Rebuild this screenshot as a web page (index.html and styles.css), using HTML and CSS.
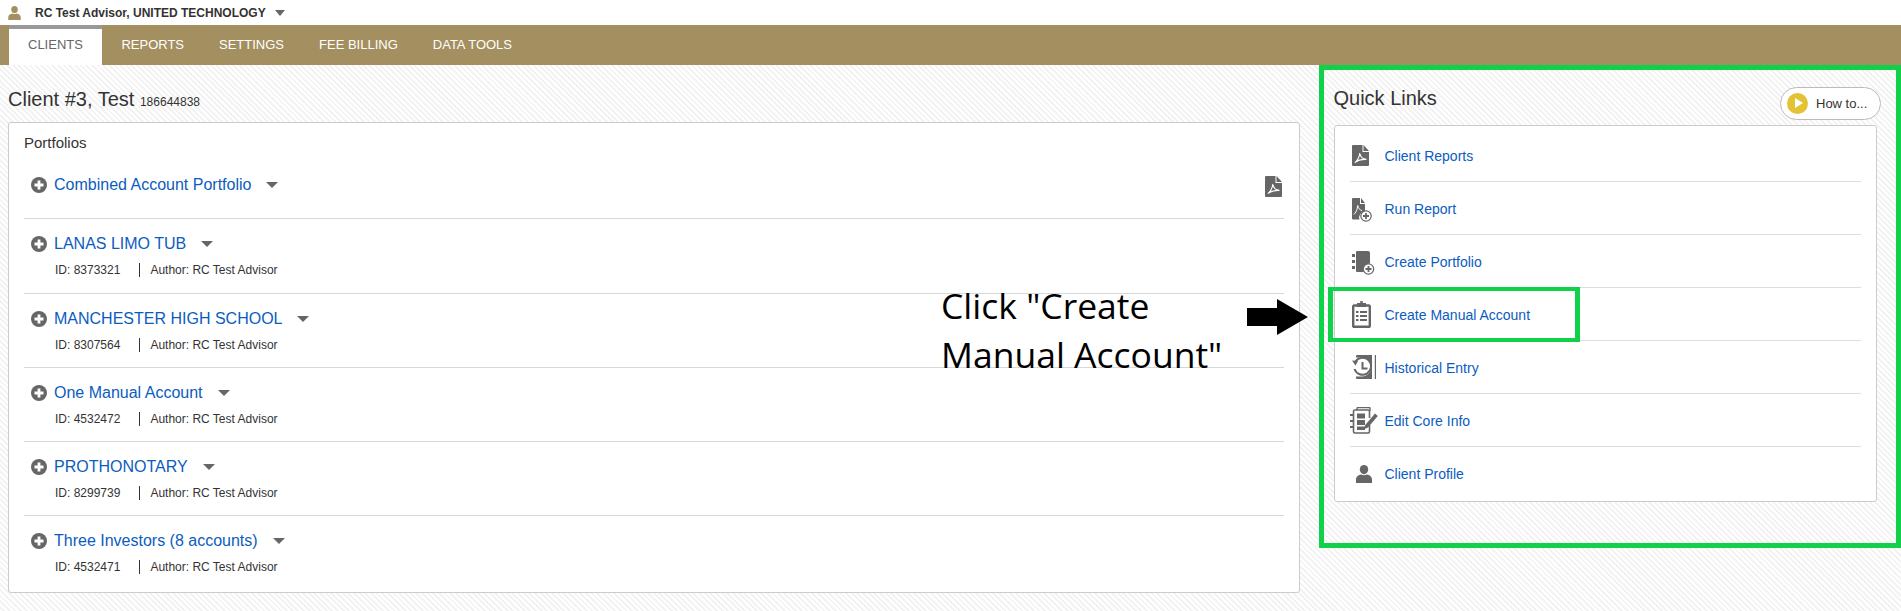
FILE: index.html
```html
<!DOCTYPE html>
<html lang="en">
<head>
    <meta charset="UTF-8">
    <meta name="viewport" content="width=device-width, initial-scale=1.0">
    <title>Client Overview</title>
    <link rel="stylesheet" href="styles.css">
</head>
<body>

<svg class="icon-defs" xmlns="http://www.w3.org/2000/svg">
    <symbol id="icon-person" viewBox="0 0 16 18">
        <ellipse cx="8" cy="4.6" rx="4.2" ry="4.6"/>
        <path d="M0 18v-3.6C0 11.6 2.6 10 5 9.6c1.8 1 4.2 1 6 0 2.4.4 5 2 5 4.8V18z"/>
    </symbol>
    <symbol id="icon-plus" viewBox="0 0 16 16">
        <circle cx="8" cy="8" r="8"/>
        <path d="M6.6 3.5h2.8v3.1h3.1v2.8H9.4v3.1H6.6V9.4H3.5V6.6h3.1z" fill="#fff"/>
    </symbol>
    <symbol id="icon-pdf" viewBox="0 0 17 21">
        <path d="M1 0h9.5v7H17v13a1 1 0 0 1-1 1H1a1 1 0 0 1-1-1V1a1 1 0 0 1 1-1z"/>
        <path d="M11.5 0L17 6h-5.500z"/>
        <path d="M2.800 17.500C5 16.500 7.500 12 7.800 8c.4 3.500 3 6 6.700 6.400-3.700-.2-8.500.8-11.700 3.100z" fill="none" stroke="#fff" stroke-width="1.100"/>
    </symbol>
    <symbol id="icon-run" viewBox="0 0 20 24">
        <path d="M1 0h7v6h5v7.500a6 6 0 0 0-5.500 8H1a1 1 0 0 1-1-1V1a1 1 0 0 1 1-1z"/>
        <path d="M9 0l4 5H9z"/>
        <path d="M1.800 16.500C4 15 5.500 11 5.700 7.500c.4 2.500 2 4.500 4.300 5.100" fill="none" stroke="#fff" stroke-width="1"/>
        <circle cx="14" cy="18" r="5.200" fill="#fff" stroke="#666" stroke-width="1.200"/>
        <path d="M13.100 15h1.800v2.100H17v1.800h-2.100V21h-1.800v-2.100H11v-1.800h2.100z"/>
    </symbol>
    <symbol id="icon-book-add" viewBox="0 0 23 24">
        <path d="M5 0h11a2 2 0 0 1 2 2v10.500a6 6 0 0 0-6 8.500H5a1 1 0 0 1-1-1V1a1 1 0 0 1 1-1z"/>
        <path d="M0 3h3v3H0zM0 9h3v3H0zM0 15h3v3H0z"/>
        <circle cx="16.500" cy="18" r="5.200" fill="#fff" stroke="#666" stroke-width="1.200"/>
        <path d="M15.600 15h1.800v2.100h2.100v1.800h-2.100V21h-1.800v-2.100h-2.100v-1.800h2.100z"/>
    </symbol>
    <symbol id="icon-clipboard" viewBox="0 0 19 27">
        <path d="M2 4.500h15a.8.800 0 0 1 .8.800v19.700a.8.800 0 0 1-.8.800H2a.8.800 0 0 1-.8-.800V5.300a.8.800 0 0 1 .8-.800z" fill="none" stroke="#666" stroke-width="2.400"/>
        <path d="M8.300 0h2.400v2H14v4H5V2h3.300z"/>
        <path d="M4 10h2.500v2H4zM8 10h7v2H8zM4 14h2.500v2H4zM8 14h7v2H8zM4 18h2.500v2H4zM8 18h7v2H8z"/>
    </symbol>
    <symbol id="icon-history" viewBox="0 0 24 24">
        <path d="M5 0h15v24H5a1 1 0 0 1-1-1v-1.500h6a9.500 9.500 0 0 0 0-19H4V1a1 1 0 0 1 1-1z"/>
        <rect x="22.800" y="0" width="1.200" height="24"/>
        <path d="M3.500 6.500A8.500 8.500 0 1 1 2.500 14" fill="none" stroke="#666" stroke-width="2"/>
        <path d="M0 5.500l6 .5-2.500 4.500z"/>
        <path d="M9.500 7h2v5.500h4v2h-6z"/>
    </symbol>
    <symbol id="icon-edit" viewBox="0 0 28 27">
        <path d="M7 3V1.500A1 1 0 0 1 8 .5h11a1 1 0 0 1 1 1V4" fill="none" stroke="#666" stroke-width="1.400"/>
        <path d="M18 26H5a1.500 1.500 0 0 1-1.500-1.500V4.500A1.500 1.500 0 0 1 5 3h13a1.500 1.500 0 0 1 1.500 1.500V11M19.500 18v6.500A1.500 1.500 0 0 1 18 26" fill="none" stroke="#666" stroke-width="1.600"/>
        <path d="M0 7h4v2H0zM0 13h4v2H0zM0 19h4v2H0z"/>
        <path d="M7 6.500h8v5H7zM7 13h8v5H7zM7 19.500h8v3.500H7z"/>
        <path d="M25 6.500l2.800 2.400-9.800 11.600-3.700 1.500.9-3.900z"/>
    </symbol>
</svg>

<div class="user-bar">
    <svg class="user-icon"><use href="#icon-person"/></svg>
    <span class="user-name">RC Test Advisor, UNITED TECHNOLOGY</span>
    <span class="caret user-caret"></span>
</div>

<nav class="main-nav">
    <a href="#" class="nav-tab active">CLIENTS</a>
    <a href="#" class="nav-tab">REPORTS</a>
    <a href="#" class="nav-tab">SETTINGS</a>
    <a href="#" class="nav-tab">FEE BILLING</a>
    <a href="#" class="nav-tab">DATA TOOLS</a>
</nav>

<div class="content">
    <main class="client-col">
        <h1 class="client-title">Client #3, Test <small>186644838</small></h1>

        <section class="card portfolios">
            <h2 class="portfolios-title">Portfolios</h2>

            <div class="portfolio combined">
                <div class="portfolio-head">
                    <svg class="plus-icon"><use href="#icon-plus"/></svg>
                    <a href="#" class="portfolio-link">Combined Account Portfolio</a>
                    <span class="caret"></span>
                </div>
                <svg class="pdf-icon"><use href="#icon-pdf"/></svg>
            </div>

            <div class="portfolio">
                <div class="portfolio-head">
                    <svg class="plus-icon"><use href="#icon-plus"/></svg>
                    <a href="#" class="portfolio-link">LANAS LIMO TUB</a>
                    <span class="caret"></span>
                </div>
                <div class="portfolio-meta"><span class="meta-id">ID: 8373321</span><span>Author: RC Test Advisor</span></div>
            </div>

            <div class="portfolio">
                <div class="portfolio-head">
                    <svg class="plus-icon"><use href="#icon-plus"/></svg>
                    <a href="#" class="portfolio-link">MANCHESTER HIGH SCHOOL</a>
                    <span class="caret"></span>
                </div>
                <div class="portfolio-meta"><span class="meta-id">ID: 8307564</span><span>Author: RC Test Advisor</span></div>
            </div>

            <div class="portfolio">
                <div class="portfolio-head">
                    <svg class="plus-icon"><use href="#icon-plus"/></svg>
                    <a href="#" class="portfolio-link">One Manual Account</a>
                    <span class="caret"></span>
                </div>
                <div class="portfolio-meta"><span class="meta-id">ID: 4532472</span><span>Author: RC Test Advisor</span></div>
            </div>

            <div class="portfolio">
                <div class="portfolio-head">
                    <svg class="plus-icon"><use href="#icon-plus"/></svg>
                    <a href="#" class="portfolio-link">PROTHONOTARY</a>
                    <span class="caret"></span>
                </div>
                <div class="portfolio-meta"><span class="meta-id">ID: 8299739</span><span>Author: RC Test Advisor</span></div>
            </div>

            <div class="portfolio last">
                <div class="portfolio-head">
                    <svg class="plus-icon"><use href="#icon-plus"/></svg>
                    <a href="#" class="portfolio-link">Three Investors (8 accounts)</a>
                    <span class="caret"></span>
                </div>
                <div class="portfolio-meta"><span class="meta-id">ID: 4532471</span><span>Author: RC Test Advisor</span></div>
            </div>
        </section>
    </main>

    <aside class="links-col">
        <div class="links-head">
            <h2 class="links-title">Quick Links</h2>
            <a href="#" class="howto-button"><span class="play-dot"></span>How to...</a>
        </div>

        <ul class="card links-list">
            <li><svg class="link-icon pdf"><use href="#icon-pdf"/></svg><a href="#">Client Reports</a></li>
            <li><svg class="link-icon run"><use href="#icon-run"/></svg><a href="#">Run Report</a></li>
            <li><svg class="link-icon add"><use href="#icon-book-add"/></svg><a href="#">Create Portfolio</a></li>
            <li class="picked"><svg class="link-icon clip"><use href="#icon-clipboard"/></svg><a href="#">Create Manual Account</a></li>
            <li><svg class="link-icon hist"><use href="#icon-history"/></svg><a href="#">Historical Entry</a></li>
            <li><svg class="link-icon edit"><use href="#icon-edit"/></svg><a href="#">Edit Core Info</a></li>
            <li><svg class="link-icon user"><use href="#icon-person"/></svg><a href="#">Client Profile</a></li>
        </ul>
    </aside>
</div>

<!-- Annotation drawn over the page -->
<div class="callout">Click "Create<br>Manual Account"</div>
<svg class="callout-arrow" viewBox="0 0 61 36"><path d="M0 9h30V0l31 18-31 18v-9H0z"/></svg>

</body>
</html>
```

FILE: styles.css
```css
* {
    box-sizing: border-box;
}
body {
    font-family: "Liberation Sans", Arial, sans-serif;
    margin: 0;
    height: 611px;
    overflow: hidden;
    position: relative;
    color: #333;
    background-color: #fff;
    background-image: repeating-linear-gradient(45deg, #fff 0, #fff 2px, #f3f3f3 2px, #f3f3f3 4px);
}
a {
    text-decoration: none;
}
.icon-defs {
    display: none;
}

/* Top user bar */
.user-bar {
    height: 25px;
    display: flex;
    align-items: center;
    padding-left: 8px;
    background-color: #fff;
}
.user-icon {
    width: 13px;
    height: 14px;
    fill: #a38f5f;
    margin-right: 14px;
}
.user-name {
    font-size: 12px;
    font-weight: bold;
    color: #333;
}
.caret {
    display: inline-block;
    border-left: 6px solid transparent;
    border-right: 6px solid transparent;
    border-top: 6px solid #666;
}
.user-caret {
    border-left-width: 5px;
    border-right-width: 5px;
    margin-left: 9px;
}

/* Main tabs */
.main-nav {
    height: 40px;
    display: flex;
    padding-left: 9px;
    background-color: #a38f5f;
}
.nav-tab {
    font-size: 13px;
    line-height: 40px;
    color: #fff;
    padding: 0 17.5px;
}
.nav-tab.active {
    color: #666;
    background-color: #fff;
    border-top: 4px solid #999;
    line-height: 32px;
    padding: 0 19px;
    margin-right: 2px;
}

.content {
    display: flex;
    align-items: flex-start;
}

/* Left column */
.client-col {
    width: 1319px;
    padding: 22px 19px 0 8px;
}
.client-title {
    font-size: 20px;
    font-weight: normal;
    line-height: 24px;
    margin: 0 0 11px;
}
.client-title small {
    font-size: 12px;
    line-height: 1;
}
.card {
    background-color: #fff;
    border: 1px solid #ccc;
    border-radius: 3px;
}
.portfolios {
    height: 471px;
    padding: 11px 15px 0;
}
.portfolios-title {
    font-size: 15px;
    font-weight: normal;
    line-height: 18px;
    margin: 0;
}
.portfolio {
    height: 74px;
    padding: 13.5px 0 0 7px;
    border-bottom: 1px solid #d8d8d8;
}
.portfolio.combined {
    height: 67px;
    padding: 22px 2px 0 7px;
    display: flex;
    justify-content: space-between;
    align-items: flex-start;
}
.portfolio.combined + .portfolio {
    height: 75px;
}
.portfolio.last {
    border-bottom: none;
}
.portfolio-head {
    display: flex;
    align-items: center;
    height: 22px;
}
.plus-icon {
    width: 16px;
    height: 16px;
    fill: #666;
    margin-right: 7px;
}
.portfolio-link {
    font-size: 16px;
    color: #0b5cc0;
    margin-right: 15px;
}
.pdf-icon {
    width: 17px;
    height: 21px;
    fill: #666;
    margin-top: 2px;
}
.portfolio-meta {
    font-size: 12px;
    line-height: 14px;
    margin: 8px 0 0 24px;
    display: flex;
}
.meta-id {
    padding-right: 19px;
    margin-right: 10px;
    border-right: 1px solid #333;
}

/* Quick links column */
.links-col {
    width: 582px;
    height: 483px;
    border: 5px solid #11d04a;
    padding: 0 19px 0 9.5px;
}
.links-head {
    height: 55px;
    display: flex;
    justify-content: space-between;
    align-items: flex-start;
    margin-right: -4px;
}
.links-title {
    font-size: 20px;
    font-weight: normal;
    line-height: 24px;
    margin: 16px 0 0;
}
.howto-button {
    width: 101px;
    height: 33px;
    margin-top: 17px;
    display: flex;
    align-items: center;
    padding-left: 6px;
    font-size: 13px;
    color: #333;
    background-color: #fff;
    border: 1px solid #bbb;
    border-radius: 17px;
}
.play-dot {
    width: 21px;
    height: 21px;
    margin-right: 8px;
    border-radius: 50%;
    background-color: #e3c235;
    position: relative;
}
.play-dot::after {
    content: "";
    position: absolute;
    left: 8px;
    top: 5px;
    border-left: 8px solid #fff;
    border-top: 5.5px solid transparent;
    border-bottom: 5.5px solid transparent;
}
.links-list {
    list-style-type: none;
    height: 377px;
    margin: 0;
    padding: 3px 15px 0;
}
.links-list li {
    height: 53px;
    display: grid;
    grid-template-columns: 35px 1fr;
    align-items: center;
    position: relative;
    border-bottom: 1px solid #ddd;
}
.links-list li:last-child {
    border-bottom: none;
}
.links-list a {
    font-size: 14px;
    color: #0b5cc0;
    padding-top: 2px;
}
.links-list li:last-child a {
    padding-top: 1px;
}
.link-icon {
    fill: #666;
    margin-left: 2px;
}
.link-icon.pdf { width: 17px; height: 21px; }
.link-icon.run { width: 20px; height: 24px; margin-top: 4px; }
.link-icon.add { width: 23px; height: 24px; margin-top: 4px; }
.link-icon.clip { width: 19px; height: 27px; }
.link-icon.hist { width: 24px; height: 24px; }
.link-icon.edit { width: 28px; height: 27px; margin-left: 0; }
.link-icon.user { width: 16px; height: 18px; margin-left: 6px; }

/* Green box round the row the callout points at */
.picked::after {
    content: "";
    box-sizing: border-box;
    position: absolute;
    left: -22px;
    top: -1px;
    width: 252px;
    height: 55px;
    border: 5px solid #11d04a;
    border-width: 4px 5px;
}

.callout {
    position: absolute;
    left: 941px;
    top: 281px;
    font-family: "Open Sans", sans-serif;
    font-size: 35.5px;
    line-height: 49px;
    color: #000;
}
.callout-arrow {
    position: absolute;
    left: 1247px;
    top: 299px;
    width: 61px;
    height: 36px;
    fill: #000;
}
```
